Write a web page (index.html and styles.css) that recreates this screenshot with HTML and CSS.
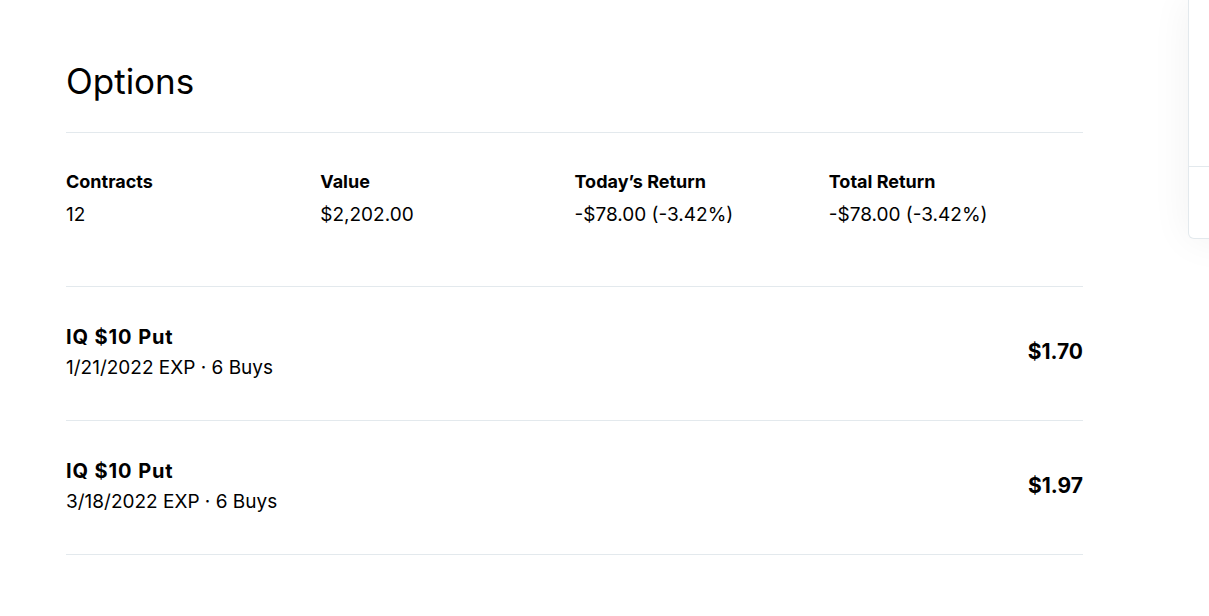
FILE: index.html
```html
<!DOCTYPE html>
<html lang="en">
<head>
    <meta charset="UTF-8">
    <meta name="viewport" content="width=device-width, initial-scale=1.0">
    <title>Options</title>
    <link rel="stylesheet" href="styles.css">
</head>
<body>
    <div class="layout">
        <main class="options">
            <h1 class="options-title">Options</h1>

            <div class="summary">
                <div class="stat">
                    <div class="stat-label">Contracts</div>
                    <div class="stat-value">12</div>
                </div>
                <div class="stat">
                    <div class="stat-label">Value</div>
                    <div class="stat-value">$2,202.00</div>
                </div>
                <div class="stat">
                    <div class="stat-label">Today’s Return</div>
                    <div class="stat-value">-$78.00 (-3.42%)</div>
                </div>
                <div class="stat">
                    <div class="stat-label">Total Return</div>
                    <div class="stat-value">-$78.00 (-3.42%)</div>
                </div>
            </div>

            <div class="position">
                <div class="position-info">
                    <div class="position-name">IQ $10 Put</div>
                    <div class="position-meta">1/21/2022 EXP · 6 Buys</div>
                </div>
                <div class="position-price">$1.70</div>
            </div>
            <div class="position">
                <div class="position-info">
                    <div class="position-name">IQ $10 Put</div>
                    <div class="position-meta">3/18/2022 EXP · 6 Buys</div>
                </div>
                <div class="position-price">$1.97</div>
            </div>
        </main>

        <aside class="sidebar">
            <div class="sidebar-top"></div>
            <div class="sidebar-bottom"></div>
        </aside>
    </div>
</body>
</html>
```

FILE: styles.css
```css
body {
    margin: 0;
    background-color: #fff;
    color: #000;
    font-family: Inter, "Liberation Sans", sans-serif;
    overflow: hidden;
}
.layout {
    display: flex;
    align-items: flex-start;
    padding-left: 66px;
    gap: 105px;
    width: 1600px;
}
.options {
    width: 1017px;
    flex-shrink: 0;
    padding-top: 58px;
}
.options-title {
    margin: 0;
    font-size: 35px;
    font-weight: 400;
    line-height: 46px;
    padding-bottom: 28px;
    border-bottom: 1px solid #e3e9ed;
}
.summary {
    display: grid;
    grid-template-columns: repeat(4, 1fr);
    padding: 37px 0 59px;
    border-bottom: 1px solid #e3e9ed;
}
.stat-label {
    font-size: 18px;
    font-weight: 700;
    line-height: 24px;
    margin-bottom: 9px;
}
.stat-value {
    font-size: 19px;
    line-height: 24px;
}
.position {
    box-sizing: border-box;
    display: flex;
    align-items: center;
    justify-content: space-between;
    height: 134px;
    padding-bottom: 4px;
    border-bottom: 1px solid #e3e9ed;
}
.position-name {
    font-size: 20px;
    font-weight: 700;
    letter-spacing: 0.9px;
    line-height: 26px;
    margin-bottom: 6px;
}
.position-meta {
    font-size: 19px;
    line-height: 24px;
}
.position-price {
    font-size: 21px;
    font-weight: 700;
}
.sidebar {
    width: 340px;
    flex-shrink: 0;
    border: 1px solid #e3e9ed;
    border-top: none;
    border-radius: 0 0 6px 6px;
    background-color: #fff;
    box-shadow: 0 0 40px rgba(0, 0, 0, 0.06);
}
.sidebar-top {
    height: 166px;
    border-bottom: 1px solid #e3e9ed;
}
.sidebar-bottom {
    height: 71px;
}
```
